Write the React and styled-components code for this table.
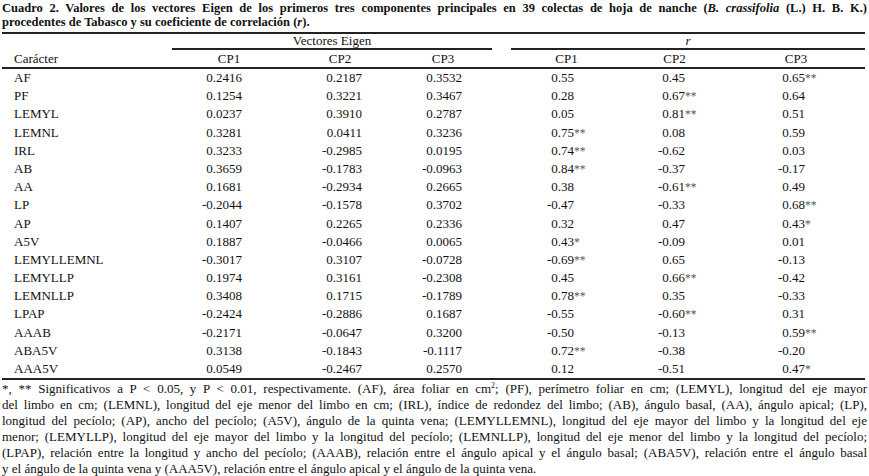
import React from "react";
import styled, { createGlobalStyle } from "styled-components";

const GlobalStyle = createGlobalStyle`
  html, body {
    margin: 0;
    padding: 0;
    background: #ffffff;
  }
  body {
    font-family: "Liberation Serif", "Times New Roman", serif;
    color: #111;
  }
`;

const Page = styled.div`
  width: 865px;
  padding-left: 2px;
  font-size: 13px;
`;

const Title = styled.div`
  font-weight: bold;
  font-size: 12.5px;
  line-height: 14px;
  padding-top: 1px;
  height: 31px;
`;

const TitleLine = styled.div`
  text-align: ${(p) => (p.$last ? "left" : "justify")};
  text-align-last: ${(p) => (p.$last ? "left" : "justify")};
  white-space: nowrap;
`;

const Table = styled.div`
  width: 863px;
  display: grid;
  grid-template-columns: 170px 114px 108px 98px 19px 111px 105px 138px;
`;

const Rule = styled.div`
  grid-column: ${(p) => p.$span || "1 / -1"};
  height: 0;
  border-top: 2px solid #222;
`;

const GroupHead = styled.div`
  grid-column: ${(p) => p.$span};
  height: 14px;
  line-height: 14px;
  text-align: center;
  font-style: ${(p) => (p.$italic ? "italic" : "normal")};
`;

const HeadCell = styled.div`
  height: 17px;
  line-height: 17px;
  text-align: ${(p) => (p.$left ? "left" : "center")};
  padding-left: ${(p) => (p.$left ? "12px" : "0")};
`;

const NameCell = styled.div`
  height: 18.2px;
  line-height: 18.2px;
  padding-left: 12px;
`;

const ValueCell = styled.div`
  height: 18.2px;
  line-height: 18.2px;
  display: flex;
  padding-left: ${(p) => p.$indent}px;
`;

const Num = styled.span`
  display: inline-block;
  width: ${(p) => p.$w}px;
  text-align: right;
`;

const Stars = styled.span`
  color: #555;
  font-size: 11.5px;
`;

const Spacer = styled.div``;

const Notes = styled.div`
  width: 865px;
  font-size: 13px;
  line-height: 16px;
  padding-top: 1px;
`;

const NoteLine = styled.div`
  text-align: ${(p) => (p.$last ? "left" : "justify")};
  text-align-last: ${(p) => (p.$last ? "left" : "justify")};
  white-space: nowrap;
`;

const Sup = styled.sup`
  font-size: 8px;
  line-height: 0;
`;

const rows = [
  ["AF", "0.2416", "0.2187", "0.3532", "0.55", "0.45", "0.65**"],
  ["PF", "0.1254", "0.3221", "0.3467", "0.28", "0.67**", "0.64"],
  ["LEMYL", "0.0237", "0.3910", "0.2787", "0.05", "0.81**", "0.51"],
  ["LEMNL", "0.3281", "0.0411", "0.3236", "0.75**", "0.08", "0.59"],
  ["IRL", "0.3233", "-0.2985", "0.0195", "0.74**", "-0.62", "0.03"],
  ["AB", "0.3659", "-0.1783", "-0.0963", "0.84**", "-0.37", "-0.17"],
  ["AA", "0.1681", "-0.2934", "0.2665", "0.38", "-0.61**", "0.49"],
  ["LP", "-0.2044", "-0.1578", "0.3702", "-0.47", "-0.33", "0.68**"],
  ["AP", "0.1407", "0.2265", "0.2336", "0.32", "0.47", "0.43*"],
  ["A5V", "0.1887", "-0.0466", "0.0065", "0.43*", "-0.09", "0.01"],
  ["LEMYLLEMNL", "-0.3017", "0.3107", "-0.0728", "-0.69**", "0.65", "-0.13"],
  ["LEMYLLP", "0.1974", "0.3161", "-0.2308", "0.45", "0.66**", "-0.42"],
  ["LEMNLLP", "0.3408", "0.1715", "-0.1789", "0.78**", "0.35", "-0.33"],
  ["LPAP", "-0.2424", "-0.2886", "0.1687", "-0.55", "-0.60**", "0.31"],
  ["AAAB", "-0.2171", "-0.0647", "0.3200", "-0.50", "-0.13", "0.59**"],
  ["ABA5V", "0.3138", "-0.1843", "-0.1117", "0.72**", "-0.38", "-0.20"],
  ["AAA5V", "0.0549", "-0.2467", "0.2570", "0.12", "-0.51", "0.47*"],
];

// indent from column start, and width of the right-aligned number box
const vecCols = [26, 32, 24];
const rCols = [31, 31, 46];

const Value = ({ text, indent, w }) => {
  const num = text.replace(/\*+$/, "");
  const stars = text.slice(num.length);
  return (
    <ValueCell $indent={indent}>
      <Num $w={w}>{num}</Num>
      {stars && <Stars>{stars}</Stars>}
    </ValueCell>
  );
};

const notes = [
  <>
    *, ** Significativos a P &lt; 0.05, y P &lt; 0.01, respectivamente. (AF), área foliar en cm<Sup>2</Sup>; (PF), perímetro foliar en cm; (LEMYL), longitud del eje mayor
  </>,
  "del limbo en cm; (LEMNL), longitud del eje menor del limbo en cm; (IRL), índice de redondez del limbo;  (AB), ángulo basal, (AA), ángulo apical; (LP),",
  "longitud  del pecíolo; (AP), ancho del pecíolo; (A5V), ángulo de la quinta vena; (LEMYLLEMNL), longitud del eje mayor del limbo y la longitud del eje",
  "menor; (LEMYLLP), longitud del eje mayor del limbo y la longitud del pecíolo; (LEMNLLP), longitud del eje menor del limbo y la longitud del pecíolo;",
  "(LPAP), relación entre la longitud y ancho del pecíolo; (AAAB), relación entre el ángulo apical y el ángulo basal; (ABA5V), relación entre el ángulo basal",
  "y el ángulo de la quinta vena  y (AAA5V), relación entre el ángulo apical y el ángulo de la quinta vena.",
];

const App = () => {
  return (
    <>
      <GlobalStyle />
      <Page>
        <Title>
          <TitleLine>
            Cuadro 2. Valores de los vectores Eigen de los primeros tres componentes principales en 39 colectas de hoja de nanche (<i>B. crassifolia</i> (L.) H. B. K.)
          </TitleLine>
          <TitleLine $last>
            procedentes de Tabasco y su coeficiente de correlación (<i>r</i>).
          </TitleLine>
        </Title>
        <Table>
          <Rule />
          <Spacer />
          <GroupHead $span="2 / 5">Vectores Eigen</GroupHead>
          <Spacer />
          <GroupHead $span="6 / 9" $italic>r</GroupHead>
          <Spacer />
          <Rule $span="2 / 5" />
          <Spacer />
          <Rule $span="6 / 9" />
          <HeadCell $left>Carácter</HeadCell>
          <HeadCell>CP1</HeadCell>
          <HeadCell>CP2</HeadCell>
          <HeadCell>CP3</HeadCell>
          <Spacer />
          <HeadCell>CP1</HeadCell>
          <HeadCell>CP2</HeadCell>
          <HeadCell>CP3</HeadCell>
          <Rule />
          {rows.map((r) => (
            <React.Fragment key={r[0]}>
              <NameCell>{r[0]}</NameCell>
              {r.slice(1, 4).map((v, i) => (
                <Value key={"v" + i} text={v} indent={vecCols[i]} w={44} />
              ))}
              <Spacer />
              {r.slice(4).map((v, i) => (
                <Value key={"r" + i} text={v} indent={rCols[i]} w={32} />
              ))}
            </React.Fragment>
          ))}
          <Rule />
        </Table>
        <Notes>
          {notes.map((n, i) => (
            <NoteLine key={i} $last={i === notes.length - 1}>
              {n}
            </NoteLine>
          ))}
        </Notes>
      </Page>
    </>
  );
};

export default App;
